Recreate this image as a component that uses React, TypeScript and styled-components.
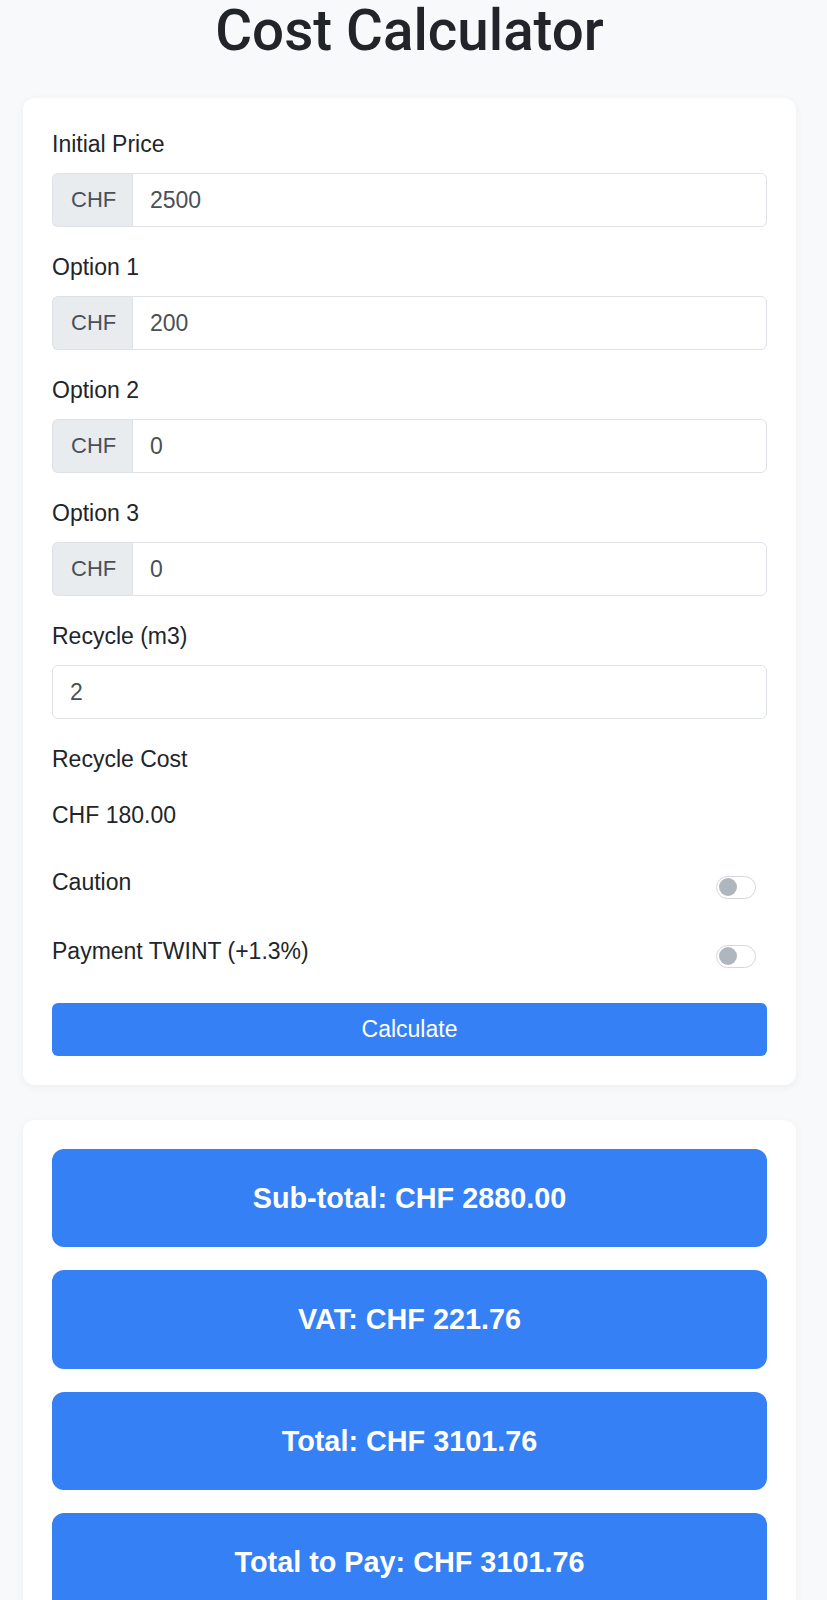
import { useState } from 'react';
import styled, { createGlobalStyle } from 'styled-components';

const GlobalStyle = createGlobalStyle`
  body {
    margin: 0;
    background-color: #f8f9fa;
    font-family: "Liberation Sans", Arial, sans-serif;
    color: #212529;
  }
`;

const priceFields = [
  { label: 'Initial Price', value: '2500' },
  { label: 'Option 1', value: '200' },
  { label: 'Option 2', value: '0' },
  { label: 'Option 3', value: '0' },
];

const results = [
  'Sub-total: CHF 2880.00',
  'VAT: CHF 221.76',
  'Total: CHF 3101.76',
  'Total to Pay: CHF 3101.76',
];

const Switch = ({ label }: { label: string }) => {
  const [on, setOn] = useState(false);

  return (
    <SwitchRow>
      <Label as="span">{label}</Label>
      <Track $on={on} onClick={() => setOn(!on)} role="switch" aria-checked={on}>
        <Knob $on={on} />
      </Track>
    </SwitchRow>
  );
};

const App = () => {
  return (
    <>
      <GlobalStyle />
      <Container>
        <Title>Cost Calculator</Title>

        <Card>
          {priceFields.map((field) => (
            <Field key={field.label}>
              <Label>{field.label}</Label>
              <InputGroup>
                <Addon>CHF</Addon>
                <Input $grouped defaultValue={field.value} />
              </InputGroup>
            </Field>
          ))}

          <Field>
            <Label>Recycle (m3)</Label>
            <InputGroup>
              <Input defaultValue="2" />
            </InputGroup>
          </Field>

          <Field>
            <Label>Recycle Cost</Label>
            <PlainText>CHF 180.00</PlainText>
          </Field>

          <Switch label="Caution" />
          <Switch label="Payment TWINT (+1.3%)" />

          <Button>Calculate</Button>
        </Card>

        <Card>
          {results.map((text) => (
            <ResultBox key={text}>{text}</ResultBox>
          ))}
        </Card>
      </Container>
    </>
  );
};

export default App;

// Styles
const Container = styled.div`
  width: 773px;
  margin-left: 23px;
`;

const Title = styled.h1`
  margin: -3px 0 32px;
  font-family: Roboto, "Liberation Sans", sans-serif;
  font-size: 56.5px;
  line-height: 69px;
  font-weight: 500;
  text-align: center;
  color: #212529;
`;

const Card = styled.div`
  background-color: #fff;
  border-radius: 12px;
  padding: 29px;
  margin-bottom: 35px;
  box-shadow: 0 2px 10px rgba(0, 0, 0, 0.05);
`;

const Field = styled.div`
  margin-bottom: 23px;
`;

const Label = styled.label`
  display: block;
  font-size: 23px;
  line-height: 34.5px;
  margin-bottom: 11.5px;
  color: #212529;
`;

const InputGroup = styled.div`
  display: flex;
  height: 54px;
`;

const Addon = styled.span`
  display: flex;
  align-items: center;
  box-sizing: border-box;
  width: 80px;
  padding-left: 18px;
  background-color: #e9ecef;
  border: 1px solid #dee2e6;
  border-right: none;
  border-radius: 6px 0 0 6px;
  font-size: 22px;
  color: #495057;
`;

const Input = styled.input<{ $grouped?: boolean }>`
  flex: 1;
  min-width: 0;
  box-sizing: border-box;
  height: 100%;
  padding: 0 17px;
  border: 1px solid #dee2e6;
  border-radius: ${({ $grouped }) => ($grouped ? '0 6px 6px 0' : '6px')};
  font-family: inherit;
  font-size: 23px;
  color: #495057;
  background-color: #fff;
  outline: none;
`;

const PlainText = styled.div`
  padding: 9.6px 0;
  font-size: 23px;
  line-height: 34.5px;
  color: #212529;
`;

const SwitchRow = styled.div`
  display: flex;
  justify-content: space-between;
  align-items: flex-start;
  height: 46px;
  margin-bottom: 23px;
`;

const Track = styled.span<{ $on: boolean }>`
  position: relative;
  box-sizing: border-box;
  width: 40px;
  height: 23px;
  margin: 11px 11px 0 0;
  border: 1px solid ${({ $on }) => ($on ? '#3580f4' : '#d3d6da')};
  border-radius: 12px;
  background-color: ${({ $on }) => ($on ? '#3580f4' : '#fff')};
  cursor: pointer;
`;

const Knob = styled.span<{ $on: boolean }>`
  position: absolute;
  top: 1.5px;
  left: ${({ $on }) => ($on ? '19px' : '1.5px')};
  width: 18px;
  height: 18px;
  border-radius: 50%;
  background-color: ${({ $on }) => ($on ? '#fff' : '#b0b6bd')};
`;

const Button = styled.button`
  display: block;
  width: 100%;
  height: 53px;
  border: none;
  border-radius: 6px;
  background-color: #3580f4;
  color: #fff;
  font-family: inherit;
  font-size: 23px;
  cursor: pointer;
`;

const ResultBox = styled.div`
  padding: 32px 20px;
  margin-bottom: 23px;
  border-radius: 12px;
  background-color: #3580f4;
  color: #fff;
  font-size: 28.8px;
  line-height: 34.5px;
  font-weight: 700;
  text-align: center;
`;
